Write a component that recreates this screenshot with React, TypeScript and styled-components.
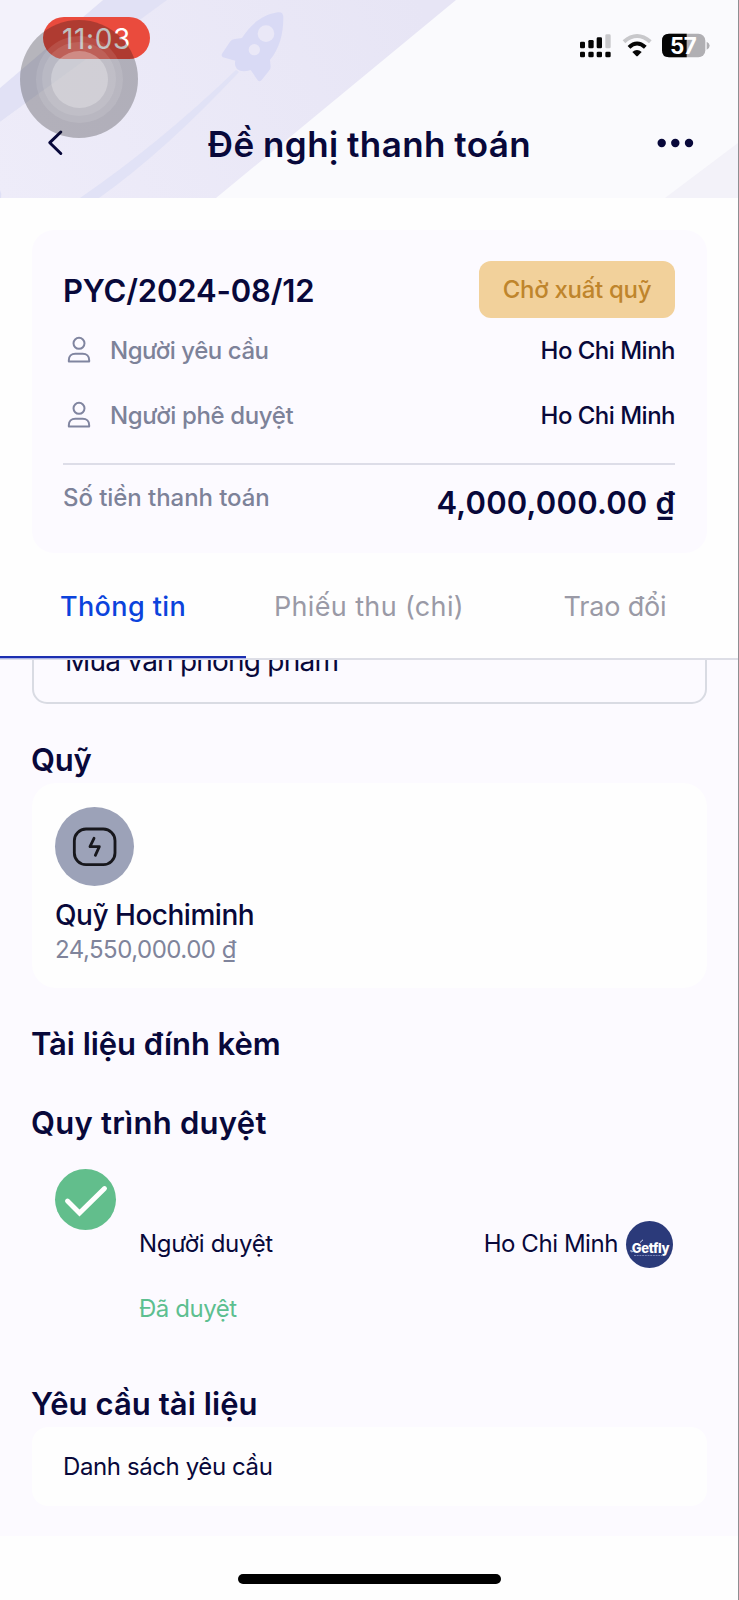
import React from "react";
import styled, { createGlobalStyle } from "styled-components";

const INK = "#08083a";
const MUTED = "#7d8299";
const SURFACE = "#fcfaff";

const GlobalStyle = createGlobalStyle`
  *, *::before, *::after { box-sizing: border-box; }
  body {
    margin: 0;
    background: #fefefe;
    font-family: Inter, "Noto Sans", sans-serif;
    color: ${INK};
  }
`;

const Screen = styled.div`
  width: 739px;
  height: 1600px;
  display: flex;
  flex-direction: column;
  overflow: hidden;
  background: #fefefe;
  border-right: 1px solid #8e8e92;
`;

interface LabelProps {
  $size?: number;
  $weight?: number;
  $color?: string;
  $track?: number;
  $line?: number;
}

const Label = styled.span<LabelProps>`
  display: block;
  white-space: pre;
  font-size: ${(p) => p.$size ?? 24}px;
  font-weight: ${(p) => p.$weight ?? 400};
  color: ${(p) => p.$color ?? INK};
  letter-spacing: ${(p) => p.$track ?? 0}px;
  line-height: ${(p) => p.$line ?? 32}px;
`;

/* ---------- header ---------- */

const Header = styled.header`
  position: relative;
  flex: none;
  height: 198px;
  background: #fafafd;
  overflow: hidden;
`;

const Backdrop = styled.svg`
  position: absolute;
  inset: 0;
`;

const StatusBar = styled.div`
  position: relative;
  height: 92px;
  padding: 17px 28px 0 43px;
  display: flex;
  justify-content: space-between;
  align-items: flex-start;
`;

const RecordingPill = styled.div`
  width: 107px;
  height: 42px;
  padding-top: 1px;
  border-radius: 21px;
  background: #ea4b3d;
  display: flex;
  justify-content: center;
  align-items: center;
`;

const StatusIcons = styled.svg`
  display: block;
  margin-top: 16px;
`;

const TitleBar = styled.div`
  position: relative;
  height: 102px;
  padding: 0 44px 0 45px;
  display: grid;
  grid-template-columns: 38px 1fr 38px;
  align-items: center;
`;

const Title = styled.h1`
  margin: 1px 0 0;
  font-size: 35px;
  font-weight: 600;
  line-height: 48px;
  letter-spacing: 0.45px;
  word-spacing: -1px;
  text-align: center;
  white-space: pre;
`;

const TouchButton = styled.div`
  position: absolute;
  left: 20px;
  top: 20px;
  width: 118px;
  height: 118px;
  border-radius: 50%;
  background: rgba(20, 20, 20, 0.27);
  display: grid;
  place-items: center;
`;

const Ring = styled.div<{ $d: number; $alpha: number }>`
  width: ${(p) => p.$d}px;
  height: ${(p) => p.$d}px;
  border-radius: 50%;
  background: rgba(255, 255, 255, ${(p) => p.$alpha});
  display: grid;
  place-items: center;
`;

/* ---------- request summary ---------- */

const Summary = styled.section`
  flex: none;
  margin: 32px 31px 0 32px;
  height: 323px;
  padding: 31px 32px 0 31px;
  border-radius: 22px;
  background: ${SURFACE};
`;

const SummaryHead = styled.div`
  height: 57px;
  display: flex;
  align-items: center;
  justify-content: space-between;
`;

const RequestCode = styled.div`
  padding-top: 3px;
`;

const StatusBadge = styled.div`
  width: 196px;
  height: 57px;
  padding-top: 1px;
  border-radius: 12px;
  background: #f2d19b;
  display: flex;
  align-items: center;
  justify-content: center;
`;

const PersonRow = styled.div`
  height: 64.5px;
  padding-top: 2px;
  display: flex;
  align-items: center;
  justify-content: space-between;
`;

const PersonLabel = styled.div`
  display: flex;
  align-items: center;
  gap: 16px;

  svg {
    margin-top: -2px;
  }
`;

const Divider = styled.div`
  height: 2px;
  margin: 16px 0 0;
  background: #dddde8;
`;

const AmountRow = styled.div`
  display: flex;
  justify-content: space-between;
  align-items: flex-start;
  padding: 17px 0 0;
`;

const Amount = styled.div`
  padding-top: 1px;
`;

/* ---------- tabs ---------- */

const Tabs = styled.nav`
  flex: none;
  height: 107px;
  display: grid;
  grid-template-columns: repeat(3, 1fr);
  border-bottom: 2px solid #dddee6;
`;

const Tab = styled.div<{ $active?: boolean }>`
  display: flex;
  align-items: center;
  justify-content: center;
  padding-top: 5px;
  border-bottom: 2px solid ${(p) => (p.$active ? "#1c2fb0" : "transparent")};
  box-shadow: ${(p) => (p.$active ? "0 1px 0 #aab2ea" : "none")};
`;

/* ---------- content ---------- */

const Content = styled.main`
  flex: none;
  height: 876px;
  padding: 0 31px 0 32px;
  overflow: hidden;
  background: ${SURFACE};
`;

const Field = styled.div`
  height: 88px;
  margin-top: -44px;
  padding: 1px 0 0 31px;
  border: 2px solid #d9dbe3;
  border-radius: 15px;
  display: flex;
  align-items: center;
`;

const Heading = styled.h2<{ $top: number; $track?: number }>`
  margin: ${(p) => p.$top}px 0 0 -1px;
  font-size: 31px;
  font-weight: 600;
  line-height: 46px;
  letter-spacing: ${(p) => p.$track ?? 0}px;
  white-space: pre;
`;

const FundCard = styled.section`
  height: 205px;
  padding: 24px 23px 0;
  border-radius: 24px;
  background: #fefefe;
`;

const FundIcon = styled.div`
  width: 79px;
  height: 79px;
  margin-bottom: 11px;
  border-radius: 50%;
  background: #9ca2b8;
  display: grid;
  place-items: center;
`;

const Approval = styled.section`
  display: flex;
  gap: 23px;
  padding: 23px 34px 0 23px;
`;

const CheckBadge = styled.div`
  flex: none;
  width: 61px;
  height: 61px;
  border-radius: 50%;
  background: #62be8c;
`;

const ApprovalBody = styled.div`
  flex: 1;
  padding-top: 51px;
`;

const ApprovalRow = styled.div`
  height: 48px;
  margin-bottom: 25px;
  display: flex;
  align-items: center;
  justify-content: space-between;
`;

const Approver = styled.div`
  display: flex;
  align-items: center;
  gap: 8px;
`;

const Avatar = styled.div`
  position: relative;
  width: 47px;
  height: 47px;
  border-radius: 50%;
  background: #2b3a7a;
  display: flex;
  justify-content: center;
  padding: 17px 0 0 2px;
`;

const AvatarMark = styled.svg`
  position: absolute;
  inset: 0;
`;

const DocumentCard = styled.section`
  height: 79px;
  padding: 1px 31px 0;
  border-radius: 16px;
  background: #fefefe;
  display: flex;
  align-items: center;
`;

const HomeArea = styled.footer`
  flex: 1;
  display: flex;
  justify-content: center;
  padding-top: 38px;
`;

const HomeIndicator = styled.div`
  width: 263px;
  height: 10px;
  border-radius: 5px;
  background: #000;
`;

function UserIcon() {
  return (
    <svg width="31" height="30" viewBox="189 345 93 90" fill="none" stroke="#8085a0" strokeWidth="6">
      <circle cx="237" cy="370" r="16.5" />
      <path d="M206.500 424.500V420C206.500 409 214 401.500 226 401.500H248C260 401.500 267.500 409 267.500 420V424.500Z" strokeLinejoin="round" />
    </svg>
  );
}

function HeaderArt() {
  return (
    <Backdrop width="738" height="198" viewBox="0 0 738 198">
      <defs>
        <linearGradient id="beam" x1="0" y1="198" x2="420" y2="0" gradientUnits="userSpaceOnUse">
          <stop offset="0" stopColor="#eeecf9" />
          <stop offset="1" stopColor="#e7e5f5" />
        </linearGradient>
      </defs>
      <path d="M0 0H103L0 88Z" fill="#f3f2fb" />
      <path d="M166 0H456L216 198H0V122Z" fill="url(#beam)" />
      <path d="M103 0H167L0 122V88Z" fill="#e1e1f5" />
      <path d="M738 143V198H665Z" fill="#f3f2f9" />
      <path d="M0 190Q2 194 1 198H0Z" fill="#dfe0f6" />
      <path d="M236 70Q160 143 80 198H99Q165 151 239 72Z" fill="#e1e2f6" />
      <g transform="scale(.33333)">
        <path
          d="M833 37Q851 34 850 54C850 102 838 147 810 180L812 200Q812 207 807 212L785 240Q777 248 771 238L752 210Q725 219 711 207Q702 197 706 182L669 172Q662 168 667 160L690 125Q695 118 705 117L726 114C752 72 788 44 833 37Z"
          fill="#d9daf5"
        />
        <circle cx="798" cy="101" r="25" fill="#eae8f7" />
        <circle cx="763" cy="149" r="17" fill="#eae8f7" />
      </g>
    </Backdrop>
  );
}

function DeviceIcons() {
  return (
    <StatusIcons width="130" height="25" viewBox="634 98 390 75">
      <g fill="#050505">
        <rect x="634" y="124" width="15" height="20" rx="4" />
        <rect x="659" y="119" width="16" height="25" rx="4" />
        <rect x="684" y="111" width="16" height="33" rx="4" />
        <rect x="634" y="154" width="15" height="17" rx="4" />
        <rect x="659" y="154" width="16" height="17" rx="4" />
        <rect x="684" y="154" width="16" height="17" rx="4" />
        <rect x="710" y="154" width="16" height="17" rx="4" />
      </g>
      <rect x="710" y="102" width="16" height="42" rx="4" fill="#c8c8cb" />
      <path d="M766 124Q805 90 845 124" fill="none" stroke="#c8c8cb" strokeWidth="12" />
      <path d="M781 141Q805 118 830 141" fill="none" stroke="#050505" strokeWidth="12" />
      <path d="M791 155Q805 143 819 155L808 166Q805 169 802 166Z" fill="#050505" />
      <rect x="880" y="100" width="130" height="71" rx="21" fill="#b0afb3" />
      <path d="M901 100H954V171H901Q880 171 880 150V121Q880 100 901 100Z" fill="#050505" />
      <path d="M1014 124Q1023 128 1023 136Q1023 144 1014 148Z" fill="#b0afb3" />
      <text x="944" y="160" textAnchor="middle" fontFamily="Inter, sans-serif" fontSize="67" fontWeight="700" fill="#fff" textLength="80">
        57
      </text>
    </StatusIcons>
  );
}

const people = [
  { label: "Người yêu cầu", track: -0.46, name: "Ho Chi Minh" },
  { label: "Người phê duyệt", track: -0.36, name: "Ho Chi Minh" },
];

const tabs = [
  { label: "Thông tin", track: 0.4, active: true },
  { label: "Phiếu thu (chi)", track: 0.36, active: false },
  { label: "Trao đổi", track: -0.18, active: false },
];

export default function App() {
  return (
    <>
      <GlobalStyle />
      <Screen>
        <Header>
          <HeaderArt />
          <StatusBar>
            <RecordingPill>
              <Label $size={28} $color="#fff" $track={0.65}>11:03</Label>
            </RecordingPill>
            <DeviceIcons />
          </StatusBar>
          <TitleBar>
            <svg width="22" height="30" viewBox="0 0 22 30" fill="none" stroke={INK} strokeWidth="3" strokeLinecap="round" strokeLinejoin="round">
              <path d="M15.800 4L4.800 14.700L15.800 25.500" />
            </svg>
            <Title>Đề nghị thanh toán</Title>
            <svg width="38" height="12" viewBox="0 0 38 12" fill={INK}>
              <circle cx="5.700" cy="6" r="4.200" />
              <circle cx="19.300" cy="6" r="4.200" />
              <circle cx="33" cy="6" r="4.200" />
            </svg>
          </TitleBar>
          <TouchButton>
            <Ring $d={87} $alpha={0.1}>
              <Ring $d={74} $alpha={0.1}>
                <Ring $d={57} $alpha={0.27} />
              </Ring>
            </Ring>
          </TouchButton>
        </Header>

        <Summary>
          <SummaryHead>
            <RequestCode>
              <Label $size={31} $weight={600} $track={-0.16}>PYC/2024-08/12</Label>
            </RequestCode>
            <StatusBadge>
              <Label $weight={500} $color="#bf852c" $track={-0.29}>Chờ xuất quỹ</Label>
            </StatusBadge>
          </SummaryHead>
          {people.map((p) => (
            <PersonRow key={p.label}>
              <PersonLabel>
                <UserIcon />
                <Label $weight={500} $color={MUTED} $track={p.track}>{p.label}</Label>
              </PersonLabel>
              <Label $weight={500} $track={-0.51}>{p.name}</Label>
            </PersonRow>
          ))}
          <Divider />
          <AmountRow>
            <Label $weight={500} $color={MUTED} $track={-0.06}>Số tiền thanh toán</Label>
            <Amount>
              <Label $size={31} $weight={600} $track={0.2} $line={40}>4,000,000.00 ₫</Label>
            </Amount>
          </AmountRow>
        </Summary>

        <Tabs>
          {tabs.map((t) => (
            <Tab key={t.label} $active={t.active}>
              <Label $size={27} $weight={t.active ? 500 : 400} $color={t.active ? "#0b43dc" : "#9a9aa6"} $track={t.track}>
                {t.label}
              </Label>
            </Tab>
          ))}
        </Tabs>

        <Content>
          <Field>
            <Label $size={28} $track={-0.78}>Mua văn phòng phẩm</Label>
          </Field>

          <Heading $top={33} $track={-0.2}>Quỹ</Heading>
          <FundCard>
            <FundIcon>
              <svg width="45" height="40" viewBox="216 138 135 120" fill="none" stroke="#17171c" strokeWidth="8.500" strokeLinecap="round" strokeLinejoin="round">
                <rect x="223" y="144" width="122" height="107" rx="35" />
                <path d="M282 172L270 197H298L286 223" />
              </svg>
            </FundIcon>
            <Label $size={28} $weight={500} $track={-0.48} $line={36}>Quỹ Hochiminh</Label>
            <Label $color="#7f849b" $track={-0.5} $line={34}>24,550,000.00 ₫</Label>
          </FundCard>

          <Heading $top={33} $track={-0.07}>Tài liệu đính kèm</Heading>
          <Heading $top={33} $track={0.26}>Quy trình duyệt</Heading>
          <Approval>
            <CheckBadge>
              <svg width="61" height="61" viewBox="0 0 61 61" fill="none" stroke="#fff" strokeWidth="4.900" strokeLinecap="round">
                <path d="M12.500 32L24.500 44L49.500 19.500" />
              </svg>
            </CheckBadge>
            <ApprovalBody>
              <ApprovalRow>
                <Label $track={-0.33}>Người duyệt</Label>
                <Approver>
                  <Label $track={-0.44}>Ho Chi Minh</Label>
                  <Avatar>
                    <Label $size={13} $weight={800} $color="#fff" $track={-0.3} $line={20}>Getfly</Label>
                    <AvatarMark width="47" height="47" viewBox="0 0 47 47" fill="none">
                      <path d="M14 21.500L17 18.800M8 29.500Q4.500 32.500 5 29" stroke="#dfe4f7" strokeWidth="1" />
                      <path d="M8 34.500H37" stroke="#7f8bbd" strokeWidth=".9" strokeDasharray="2 .7" />
                    </AvatarMark>
                  </Avatar>
                </Approver>
              </ApprovalRow>
              <Label $color="#5dbf90" $track={-0.45}>Đã duyệt</Label>
            </ApprovalBody>
          </Approval>

          <Heading $top={56} $track={0.07}>Yêu cầu tài liệu</Heading>
          <DocumentCard>
            <Label $track={-0.4}>Danh sách yêu cầu</Label>
          </DocumentCard>
        </Content>

        <HomeArea>
          <HomeIndicator />
        </HomeArea>
      </Screen>
    </>
  );
}
